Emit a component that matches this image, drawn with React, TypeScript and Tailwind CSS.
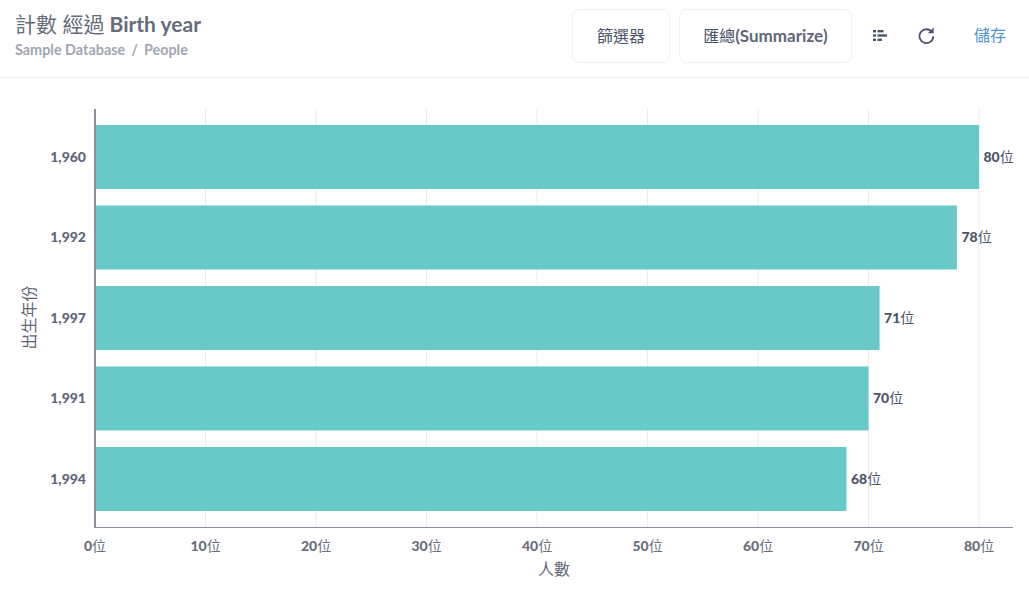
import React from 'react';

const FONT = "Lato, 'Noto Sans CJK TC', sans-serif";

const bars = [
  { label: '1,960', value: 80, y: 125, h: 64 },
  { label: '1,992', value: 78, y: 205.5, h: 64 },
  { label: '1,997', value: 71, y: 286, h: 64 },
  { label: '1,991', value: 70, y: 366.5, h: 64 },
  { label: '1,994', value: 68, y: 447, h: 64 },
];

const ticks = [0, 10, 20, 30, 40, 50, 60, 70, 80];
const scale = (v: number) => 95 + v * 11.05;

function BarChart() {
  return (
    <svg width="1029" height="516" viewBox="0 78 1029 516" className="block" style={{ fontFamily: FONT }}>
      {ticks.slice(1).map((t) => (
        <line key={t} x1={scale(t)} x2={scale(t)} y1="109" y2="527" stroke="#ececec" strokeWidth="1" />
      ))}
      {bars.map((b) => (
        <g key={b.label}>
          <rect x="95" y={b.y} width={b.value * 11.05} height={b.h} fill="#69c8c8" />
          <text x="86" y={Math.floor(b.y) + b.h / 2 + 5} textAnchor="end" fontSize="14" fontWeight="900" fill="#5e6678">
            {b.label}
          </text>
          <text x={scale(b.value) + 4.5} y={Math.floor(b.y) + b.h / 2 + 5} fontSize="14" fontWeight="900" fill="#4c5568">
            {b.value}
            <tspan fontWeight="400">位</tspan>
          </text>
        </g>
      ))}
      <line x1="95" x2="95" y1="109" y2="528" stroke="#8f8f9f" strokeWidth="2" />
      <line x1="95" x2="1013" y1="527.5" y2="527.5" stroke="#8f8f9f" strokeWidth="1" />
      {ticks.map((t) => (
        <text key={t} x={scale(t)} y="551" textAnchor="middle" fontSize="14" fontWeight="900" fill="#696e7b">
          {t}
          <tspan fontWeight="400">位</tspan>
        </text>
      ))}
      <text x="554" y="575" textAnchor="middle" fontSize="16" fill="#5e6678">人數</text>
      <text transform="translate(35 317.5) rotate(-90)" textAnchor="middle" fontSize="16" fill="#5e6678">出生年份</text>
    </svg>
  );
}

export default function App() {
  return (
    <div className="w-[1029px] h-[594px] bg-white overflow-hidden" style={{ fontFamily: FONT }}>
      <header className="h-[78px] border-b border-[#f0f0f0] flex items-start justify-between">
        <div className="pl-[15px] pt-[10px]">
          <h1 className="text-[21px] leading-[28px] font-bold text-[#666c7b]">
            <span className="font-normal">計數 經過</span> Birth year
          </h1>
          <p className="mt-[3px] text-[14.4px] leading-[18px] font-bold text-[#a2a6b2] whitespace-pre">
            Sample Database<span className="mx-[6px]">/</span>People
          </p>
        </div>
        <div className="flex items-center pt-[9px]">
          <button className="w-[98px] h-[54px] rounded-lg border border-[#f0f0f0] text-[16px] text-[#4c5568]">篩選器</button>
          <button className="ml-[9px] w-[173px] h-[54px] rounded-lg border border-[#f0f0f0] text-[16px] text-[#4c5568]">
            匯總<span className="text-[17px] font-bold text-[#5e6678]">(Summarize)</span>
          </button>
          <svg className="ml-[21px] mb-[1px]" width="14" height="11" viewBox="0 0 14 11" fill="#4c5568">
            <rect x="0" y="0" width="3" height="2.4" />
            <rect x="4.5" y="0" width="6" height="2.4" />
            <rect x="0" y="4.3" width="3" height="2.4" />
            <rect x="4.5" y="4.3" width="9.5" height="2.4" />
            <rect x="0" y="8.6" width="3" height="2.4" />
            <rect x="4.5" y="8.6" width="4.5" height="2.4" />
          </svg>
          <svg className="ml-[31px] mb-[1px]" width="17" height="17" viewBox="0 0 17 17" fill="none">
            <path d="M13.2 4.2A6.9 6.9 0 1 0 15.3 9.2" stroke="#4c5568" strokeWidth="1.8" />
            <path d="M15.6 0.4v5.8h-5.8z" fill="#4c5568" />
          </svg>
          <span className="ml-[39px] mr-[23px] mb-[2px] text-[16px] text-[#4f93d0]">儲存</span>
        </div>
      </header>
      <BarChart />
    </div>
  );
}
